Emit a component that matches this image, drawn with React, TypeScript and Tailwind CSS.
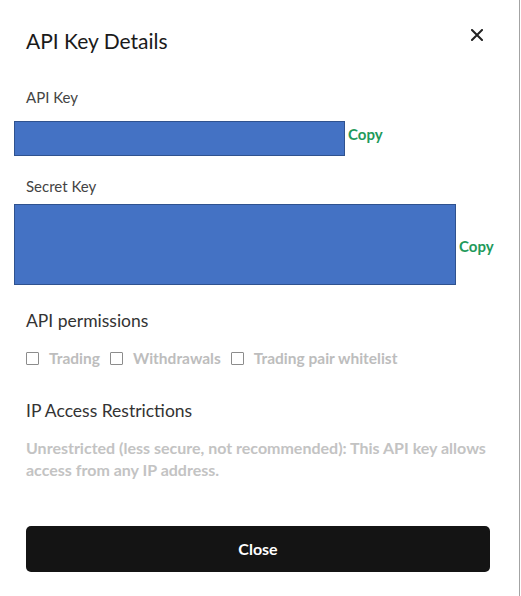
import React from 'react';

const font = { fontFamily: '"Lato", "Noto Sans", sans-serif' };

const KeyField = ({ tall }: { tall?: boolean }) => (
  <div className="flex items-center">
    <div
      className={`ml-[14px] bg-[#4472c4] border border-[#2f528f] ${
        tall ? 'w-[442px] h-[81px]' : 'w-[331px] h-[35px]'
      }`}
    />
    <button
      className={`ml-[3px] text-[15px] font-bold text-[#1f9a5b] leading-none ${
        tall ? 'mt-[4px]' : '-mt-[8px]'
      }`}
    >
      Copy
    </button>
  </div>
);

const Checkbox = ({ label }: { label: string }) => (
  <label className="flex items-center gap-[10px]">
    <span className="w-[13px] h-[13px] border border-[#8c8c8c] rounded-[1px] bg-white" />
    <span className="text-[15.5px] font-bold text-[#bdbdbd]">{label}</span>
  </label>
);

export default function App() {
  return (
    <div className="w-[520px] h-[596px] bg-white border-r border-[#a3a3a3]" style={font}>
      {/* Header */}
      <div className="flex items-center justify-between pl-[26px] pr-[36px] pt-[26px]">
        <h2 className="text-[21px] leading-[30px] text-[#1a1a1a]">API Key Details</h2>
        <svg width="12" height="12" viewBox="0 0 12 12" className="-mt-[12px]">
          <path d="M1 1L11 11M11 1L1 11" stroke="#222" strokeWidth="2" strokeLinecap="square" />
        </svg>
      </div>

      <div className="mt-[31px] pl-[26px] text-[15px] leading-[20px] text-[#444]">API Key</div>
      <div className="mt-[14px]">
        <KeyField />
      </div>

      <div className="mt-[20px] pl-[26px] text-[15px] leading-[20px] text-[#444]">Secret Key</div>
      <div className="mt-[8px]">
        <KeyField tall />
      </div>

      <div className="mt-[24px] pl-[26px] text-[17.5px] leading-[24px] text-[#333]">API permissions</div>
      <div className="mt-[14px] pl-[26px] flex items-center gap-[10px]">
        <Checkbox label="Trading" />
        <Checkbox label="Withdrawals" />
        <Checkbox label="Trading pair whitelist" />
      </div>

      <div className="mt-[29px] pl-[26px] text-[17.5px] leading-[24px] text-[#333]">IP Access Restrictions</div>
      <p className="mt-[14px] pl-[26px] pr-[24px] text-[16px] leading-[22px] font-bold text-[#c3c3c3]">
        Unrestricted (less secure, not recommended): This API key allows access from any IP address.
      </p>

      <div className="mt-[45px] px-[26px] pr-[29px]">
        <button className="w-full h-[46px] rounded-[5px] bg-[#141414] text-white text-[16px] font-bold">
          Close
        </button>
      </div>
    </div>
  );
}
